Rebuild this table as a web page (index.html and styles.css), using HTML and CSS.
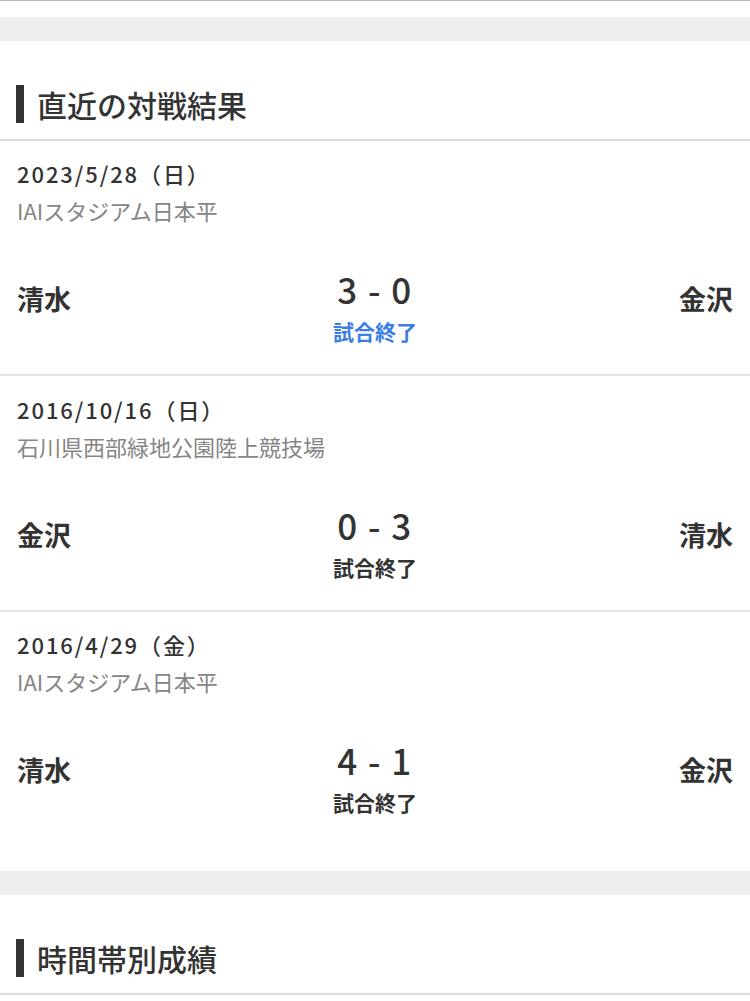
FILE: index.html
```html
<!DOCTYPE html>
<html lang="ja">
<head>
<meta charset="utf-8">
<title>直近の対戦結果</title>
<link rel="stylesheet" href="styles.css">
</head>
<body>
<div class="top-rule"></div>
<div class="band"></div>
<section class="section">
  <div class="section-head">
    <h2 class="heading">直近の対戦結果</h2>
  </div>
  <div class="match">
    <div class="date">2023/5/28（日）</div>
    <div class="venue">IAIスタジアム日本平</div>
    <div class="result">
      <div class="team">清水</div>
      <div class="center">
        <div class="score">3 - 0</div>
        <div class="status status-live">試合終了</div>
      </div>
      <div class="team team-away">金沢</div>
    </div>
  </div>
  <div class="match">
    <div class="date">2016/10/16（日）</div>
    <div class="venue">石川県西部緑地公園陸上競技場</div>
    <div class="result">
      <div class="team">金沢</div>
      <div class="center">
        <div class="score">0 - 3</div>
        <div class="status">試合終了</div>
      </div>
      <div class="team team-away">清水</div>
    </div>
  </div>
  <div class="match match-last">
    <div class="date">2016/4/29（金）</div>
    <div class="venue">IAIスタジアム日本平</div>
    <div class="result">
      <div class="team">清水</div>
      <div class="center">
        <div class="score">4 - 1</div>
        <div class="status">試合終了</div>
      </div>
      <div class="team team-away">金沢</div>
    </div>
  </div>
</section>
<div class="band"></div>
<section class="section">
  <div class="section-head">
    <h2 class="heading">時間帯別成績</h2>
  </div>
</section>
</body>
</html>
```
FILE: styles.css
```css
html, body {
  margin: 0;
  padding: 0;
  background: #fff;
}
body {
  font-family: "Noto Sans CJK JP", "Noto Sans", sans-serif;
  color: #333;
  width: 750px;
}
.top-rule {
  height: 1px;
  background: #b8b8b8;
  margin-bottom: 16px;
}
.band {
  height: 24px;
  background: #eeeeee;
}
.section {
  padding-top: 44px;
}
.section-head {
  padding: 0 0 16px 16px;
  border-bottom: 2px solid #dcdcdc;
}
.heading {
  margin: 0;
  padding-left: 13px;
  border-left: 8px solid #333;
  font-size: 30px;
  line-height: 38px;
  font-weight: 500;
  color: #333;
}
.match {
  padding: 16px 17px 28px 17px;
}
.match + .match {
  border-top: 2px solid #e4e4e4;
  padding-top: 16.5px;
}
.match-last {
  padding-bottom: 54px;
}
.date {
  font-size: 22px;
  line-height: 32px;
  font-weight: 500;
  letter-spacing: 1.9px;
}
.venue {
  margin-top: 5px;
  font-size: 22px;
  line-height: 32px;
  color: #858585;
}
.result {
  margin-top: 41px;
  display: flex;
  justify-content: space-between;
  align-items: flex-start;
}
.team {
  width: 150px;
  margin-top: 12px;
  font-size: 27px;
  line-height: 40px;
  font-weight: 700;
}
.team-away {
  text-align: right;
}
.center {
  display: flex;
  flex-direction: column;
  align-items: center;
  gap: 5px;
}
.score {
  font-size: 35px;
  line-height: 44px;
  font-weight: 500;
  letter-spacing: 1.5px;
}
.status {
  font-size: 21px;
  line-height: 30px;
  font-weight: 700;
}
.status-live {
  color: #3a7de6;
}
```
